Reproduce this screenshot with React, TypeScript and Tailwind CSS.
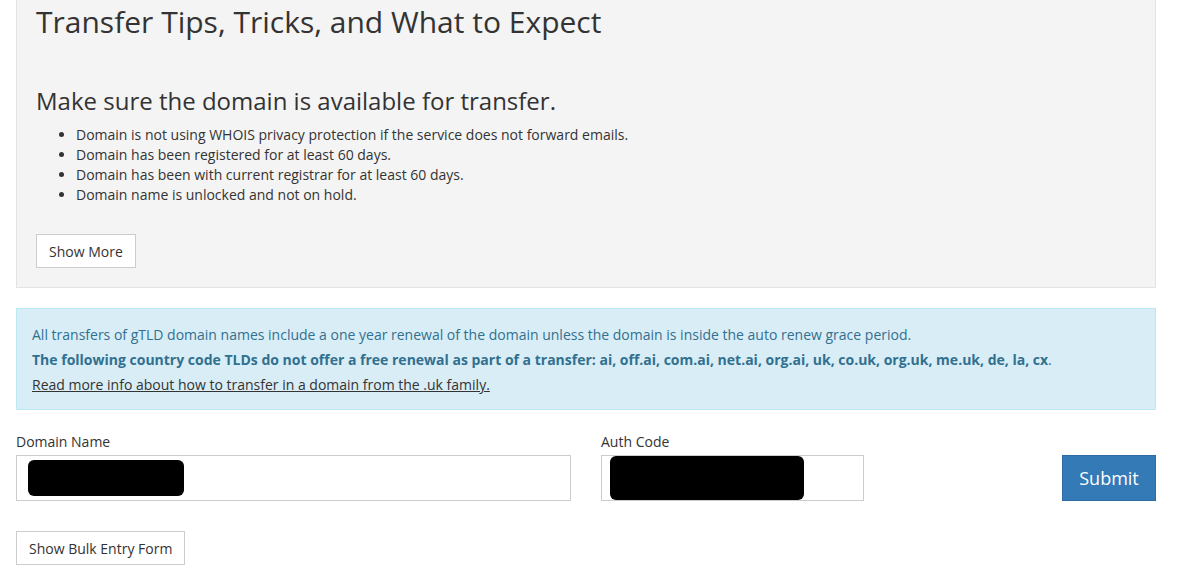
import { useState } from "react";

const tips = [
  "Domain is not using WHOIS privacy protection if the service does not forward emails.",
  "Domain has been registered for at least 60 days.",
  "Domain has been with current registrar for at least 60 days.",
  "Domain name is unlocked and not on hold.",
];

export default function App() {
  const [domain, setDomain] = useState("");
  const [auth, setAuth] = useState("");

  return (
    <div
      className="min-h-[580px] bg-white pl-4 pr-[30px] text-[14px] text-[#333]"
      style={{ fontFamily: '"Open Sans", "Liberation Sans", sans-serif' }}
    >
      {/* tips panel */}
      <div className="border border-t-0 border-[#e3e3e3] bg-[#f4f4f4] px-[19px] pb-[19px] pt-[2px]">
        <h2 className="text-[30px] leading-[40px]">Transfer Tips, Tricks, and What to Expect</h2>
        <h3 className="mt-[42px] text-[24px] leading-[34px]">Make sure the domain is available for transfer.</h3>
        <ul className="mt-[7px] pl-10 leading-[20px]">
          {tips.map(t => (
            <li key={t} className="list-disc">{t}</li>
          ))}
        </ul>
        <button className="mt-[29px] block h-[34px] border border-[#ccc] bg-white px-3 text-[14px] text-[#333]">
          Show More
        </button>
      </div>

      {/* info alert */}
      <div className="mt-[20px] border border-[#bce8f1] bg-[#d9edf7] px-[15px] pb-[12px] pt-[13px] text-[#31708f] leading-[25px]">
        <p>All transfers of gTLD domain names include a one year renewal of the domain unless the domain is inside the auto renew grace period.</p>
        <p>
          <b>The following country code TLDs do not offer a free renewal as part of a transfer: ai, off.ai, com.ai, net.ai, org.ai, uk, co.uk, org.uk, me.uk, de, la, cx</b>.
        </p>
        <p>
          <a href="#" className="text-[#333] underline">Read more info about how to transfer in a domain from the .uk family.</a>
        </p>
      </div>

      {/* form */}
      <div className="mt-[22px] flex items-end">
        <div className="w-[555px]">
          <label className="block leading-[20px]">Domain Name</label>
          <div className="mt-[3px] flex h-[46px] items-center border border-[#ccc] bg-white px-[11px]">
            <div className="h-[36px] w-[156px] rounded-[6px] bg-black" />
            <input
              value={domain}
              onChange={e => setDomain(e.target.value)}
              className="min-w-0 flex-1 bg-transparent outline-none"
            />
          </div>
        </div>
        <div className="ml-[30px] w-[263px]">
          <label className="block leading-[20px]">Auth Code</label>
          <div className="mt-[3px] flex h-[46px] items-center border border-[#ccc] bg-white px-[8px]">
            <div className="h-[44px] w-[194px] rounded-[6px] bg-black" />
            <input
              value={auth}
              onChange={e => setAuth(e.target.value)}
              className="min-w-0 flex-1 bg-transparent outline-none"
            />
          </div>
        </div>
        <button className="ml-auto h-[46px] w-[94px] border border-[#2e6da4] bg-[#337ab7] text-[18px] text-white">
          Submit
        </button>
      </div>

      <button className="mt-[30px] block h-[34px] border border-[#ccc] bg-white px-3 text-[14px] text-[#333]">
        Show Bulk Entry Form
      </button>
    </div>
  );
}
